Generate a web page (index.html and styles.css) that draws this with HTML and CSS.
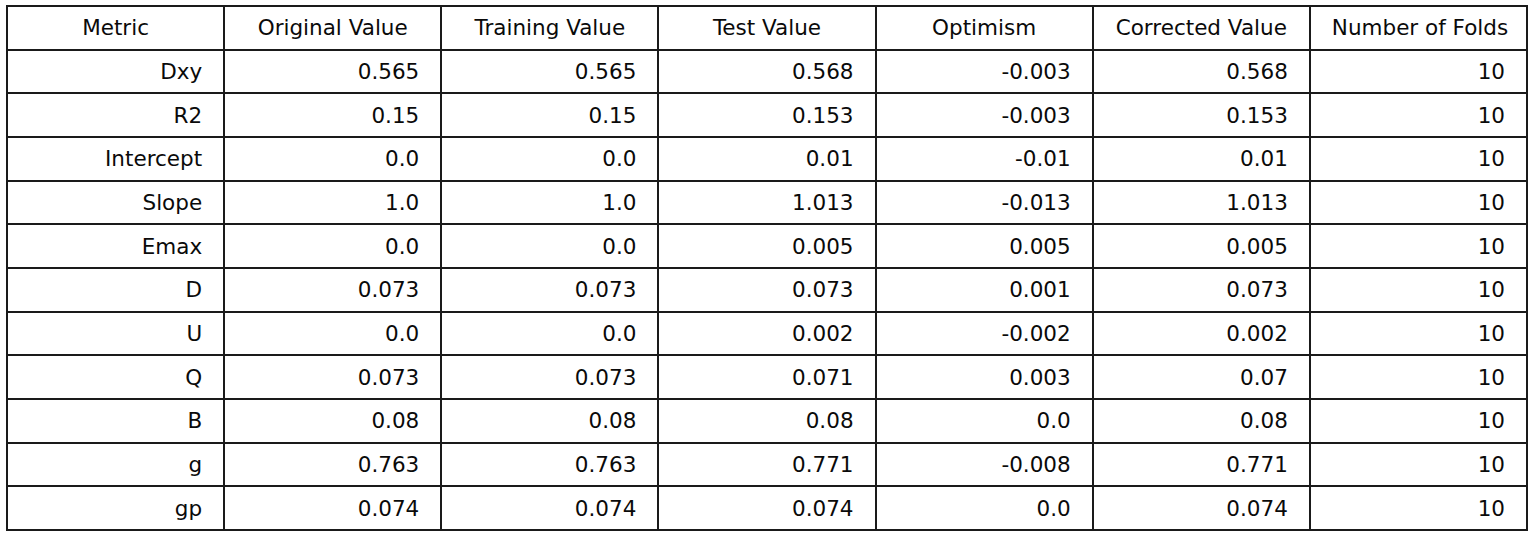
FILE: index.html
```html
<!DOCTYPE html>
<html>
<head>
<meta charset="utf-8">
<link rel="stylesheet" href="styles.css">
</head>
<body>
<table class="metrics">
<thead>
<tr><th>Metric</th><th>Original Value</th><th>Training Value</th><th>Test Value</th><th>Optimism</th><th>Corrected Value</th><th>Number of Folds</th></tr>
</thead>
<tbody>
<tr><td>Dxy</td><td>0.565</td><td>0.565</td><td>0.568</td><td>-0.003</td><td>0.568</td><td>10</td></tr>
<tr><td>R2</td><td>0.15</td><td>0.15</td><td>0.153</td><td>-0.003</td><td>0.153</td><td>10</td></tr>
<tr><td>Intercept</td><td>0.0</td><td>0.0</td><td>0.01</td><td>-0.01</td><td>0.01</td><td>10</td></tr>
<tr><td>Slope</td><td>1.0</td><td>1.0</td><td>1.013</td><td>-0.013</td><td>1.013</td><td>10</td></tr>
<tr><td>Emax</td><td>0.0</td><td>0.0</td><td>0.005</td><td>0.005</td><td>0.005</td><td>10</td></tr>
<tr><td>D</td><td>0.073</td><td>0.073</td><td>0.073</td><td>0.001</td><td>0.073</td><td>10</td></tr>
<tr><td>U</td><td>0.0</td><td>0.0</td><td>0.002</td><td>-0.002</td><td>0.002</td><td>10</td></tr>
<tr><td>Q</td><td>0.073</td><td>0.073</td><td>0.071</td><td>0.003</td><td>0.07</td><td>10</td></tr>
<tr><td>B</td><td>0.08</td><td>0.08</td><td>0.08</td><td>0.0</td><td>0.08</td><td>10</td></tr>
<tr><td>g</td><td>0.763</td><td>0.763</td><td>0.771</td><td>-0.008</td><td>0.771</td><td>10</td></tr>
<tr><td>gp</td><td>0.074</td><td>0.074</td><td>0.074</td><td>0.0</td><td>0.074</td><td>10</td></tr>
</tbody>
</table>
</body>
</html>
```
FILE: styles.css
```css
html, body {
  margin: 0;
  background: #ffffff;
}
body {
  padding: 5px 0 0 6px;
  font-family: "DejaVu Sans", sans-serif;
  font-size: 21.5px;
  color: #0a0a0a;
}
.metrics {
  border-collapse: collapse;
  table-layout: fixed;
  width: 1522px;
}
.metrics th,
.metrics td {
  border: 2px solid #1a1a1a;
  height: 43.67px;
  padding: 0 21px;
  box-sizing: border-box;
  white-space: nowrap;
  vertical-align: middle;
}
.metrics th {
  font-weight: normal;
  text-align: center;
}
.metrics td {
  text-align: right;
}
```
